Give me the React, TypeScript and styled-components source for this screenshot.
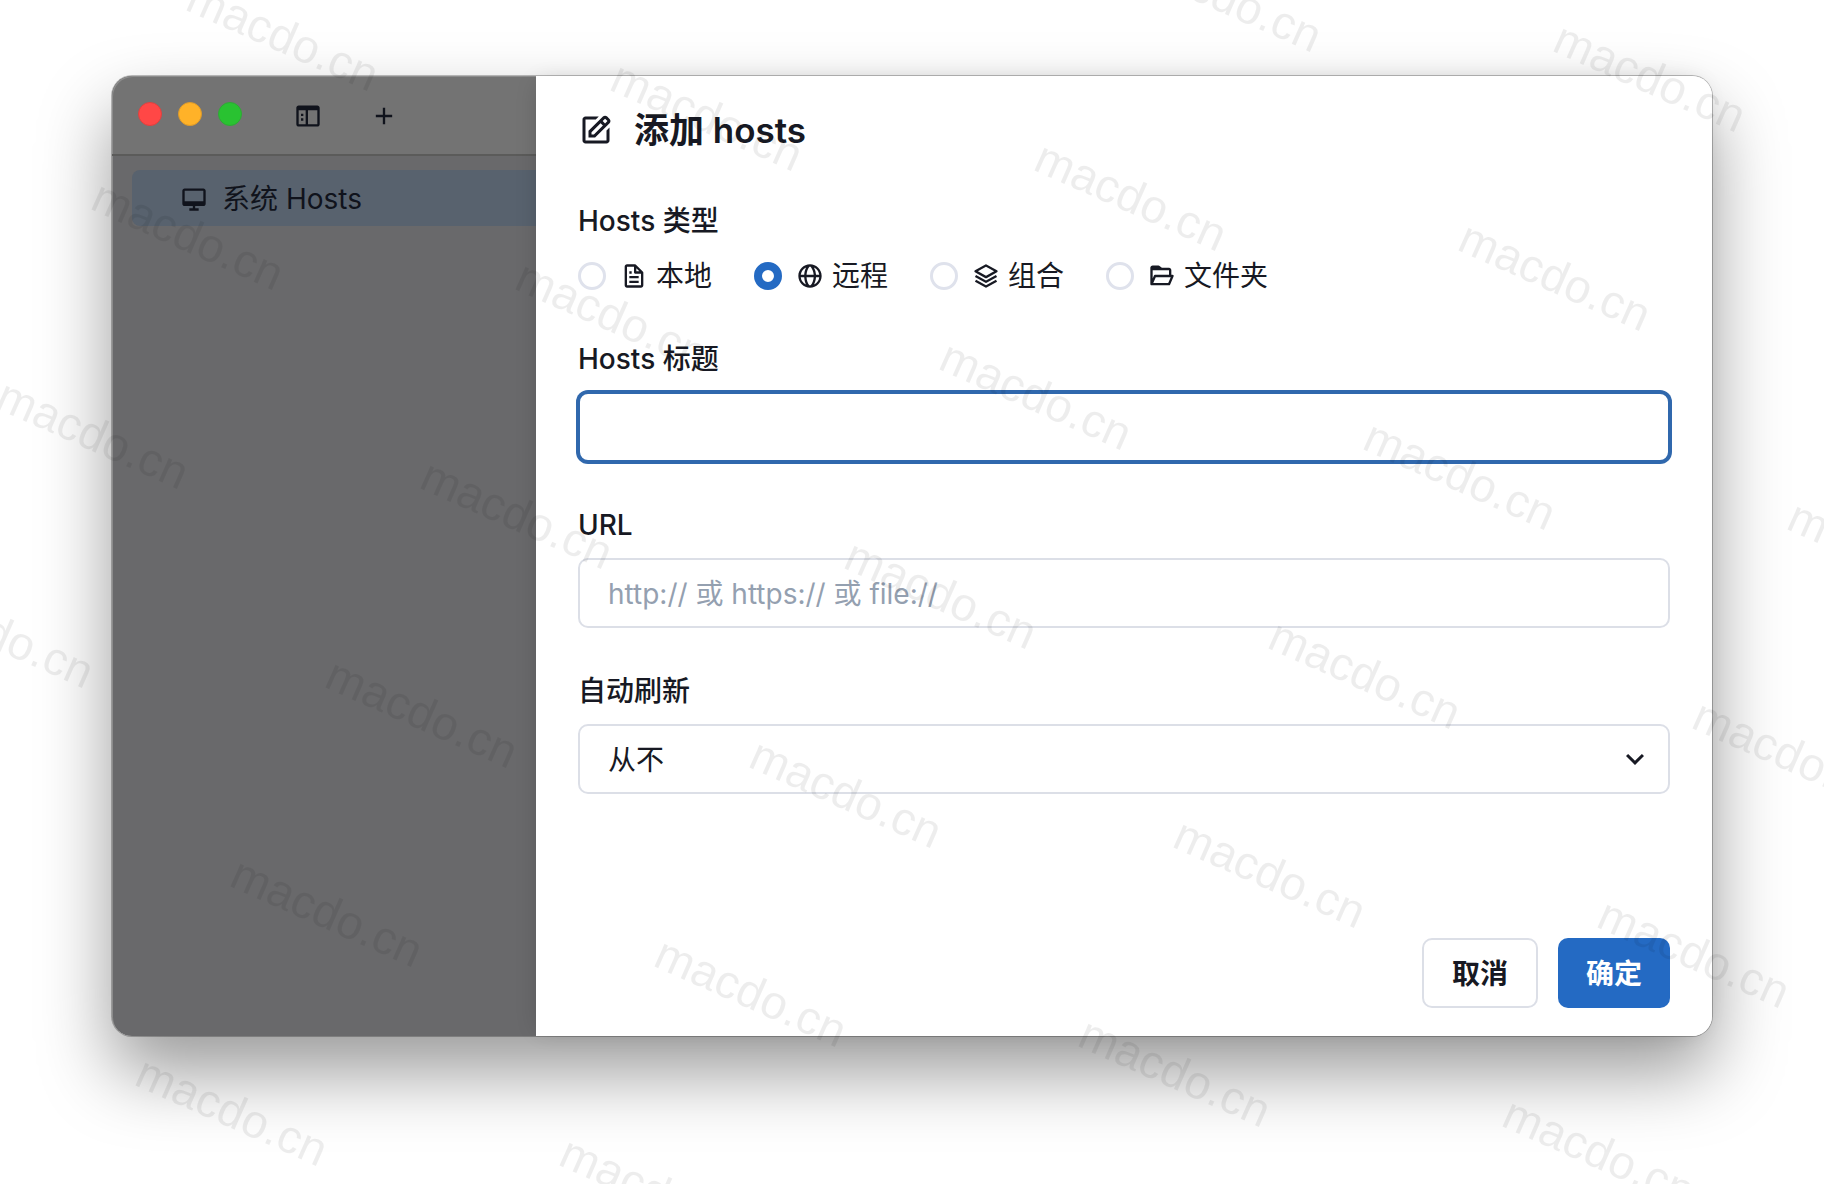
import React, { useState } from "react";
import styled, { createGlobalStyle } from "styled-components";
import {
  BiDesktop,
  BiEdit,
  BiFile,
  BiFolderOpen,
  BiGlobe,
  BiLayer,
  BiPlus,
  BiSidebar,
} from "react-icons/bi";
import { MdExpandMore } from "react-icons/md";

const color = {
  text: "#171923",
  line: "#dcdfe7",
  brand: "#246ac3",
  focus: "#3068ad",
  placeholder: "#94a0b0",
};

const GlobalStyle = createGlobalStyle`
  *, *::before, *::after { box-sizing: border-box; }
  body {
    margin: 0;
    background: #fff;
    color: ${color.text};
    font: 400 28px/42px Inter, "Noto Sans CJK SC", sans-serif;
  }
  button, input, select { font: inherit; color: inherit; }
  svg { display: block; flex: none; }
`;

const Page = styled.div`
  position: relative;
  display: flex;
  min-height: 100vh;
  padding: 76px 112px 148px;
  overflow: hidden;
`;

const Window = styled.main`
  display: flex;
  flex: 1;
  min-width: 0;
  border-radius: 20px;
  background: #fff;
  box-shadow: 0 0 0 1px rgba(0, 0, 0, 0.25), 0 36px 72px rgba(0, 0, 0, 0.4);
`;

const Sidebar = styled.aside`
  flex: 0 0 424px;
  border-radius: 20px 0 0 20px;
  background: #69696b;
  color: #10131c;
  box-shadow: inset 1px 1px 0 #8c8c8c;
`;

const Toolbar = styled.header`
  display: flex;
  align-items: center;
  height: 80px;
  padding-left: 26px;
  border-bottom: 2px solid #5b5b5a;
  border-radius: 20px 0 0 0;
  background: #737373;
  box-shadow: inset 1px 1px 0 #8c8c8c;
`;

const Lights = styled.div`
  display: flex;
  gap: 16px;
  margin-right: 38px;
  padding-bottom: 2px;
`;

const Light = styled.button<{ $fill: string; $edge: string }>`
  width: 24px;
  height: 24px;
  padding: 0;
  border: 1px solid ${(p) => p.$edge};
  border-radius: 50%;
  background: ${(p) => p.$fill};
`;

const ToolButtons = styled.div`
  display: flex;
  gap: 20px;
  padding-top: 2px;
`;

const ToolButton = styled.button`
  display: grid;
  place-items: center;
  width: 56px;
  height: 56px;
  padding: 0;
  border: 0;
  background: none;
`;

const HostList = styled.nav`
  padding: 14px 0 14px 20px;
`;

const HostItem = styled.a`
  display: flex;
  align-items: center;
  gap: 14px;
  height: 56px;
  padding: 2px 0 0 48px;
  border-radius: 8px 0 0 8px;
  background: #58626e;
  color: inherit;
  text-decoration: none;
`;

const Drawer = styled.form`
  display: flex;
  flex: 1;
  flex-direction: column;
  min-width: 0;
  border-radius: 0 20px 20px 0;
  background: #fff;
  box-shadow: -4px 0 24px -8px rgba(0, 0, 0, 0.2);
`;

const DrawerHeader = styled.header`
  display: flex;
  align-items: center;
  gap: 20px;
  padding: 28px 42px;
`;

const Title = styled.h1`
  margin: 0;
  font-size: 35px;
  line-height: 52px;
  font-weight: 600;
`;

const Fields = styled.div`
  display: flex;
  flex: 1;
  flex-direction: column;
  gap: 42px;
  padding: 16px 42px;
`;

const Field = styled.div`
  display: flex;
  flex-direction: column;
  gap: 12px;
`;

const FieldLabel = styled.label`
  align-self: flex-start;
  font-weight: 500;
`;

const RadioRow = styled.div`
  display: flex;
  flex-wrap: wrap;
  gap: 42px;
`;

const RadioOption = styled.label`
  display: flex;
  align-items: center;
  height: 42px;
  padding-top: 2px;
`;

const Radio = styled.input`
  appearance: none;
  width: 28px;
  height: 28px;
  margin: 0 14px 0 0;
  border: 3px solid #dfe2ec;
  border-radius: 50%;
  background: #fff;

  &:checked {
    border: 8px solid ${color.brand};
  }
`;

const RadioText = styled.span`
  margin-left: 8px;
`;

const TextInput = styled.input`
  width: 100%;
  height: 70px;
  padding: 2px 28px 0;
  border: 2px solid ${color.line};
  border-radius: 10px;
  background: #fff;
  outline: none;

  &::placeholder {
    color: ${color.placeholder};
    opacity: 1;
  }

  &:focus {
    border-color: ${color.focus};
    box-shadow: 0 0 0 2px ${color.focus};
  }
`;

const SelectBox = styled.div`
  position: relative;
`;

const Select = styled.select`
  appearance: none;
  width: 100%;
  height: 70px;
  padding: 2px 70px 0 28px;
  border: 2px solid ${color.line};
  border-radius: 10px;
  background: #fff;
`;

const SelectArrow = styled(MdExpandMore)`
  position: absolute;
  top: 17px;
  right: 17px;
  pointer-events: none;
`;

const DrawerFooter = styled.footer`
  display: flex;
  justify-content: flex-end;
  gap: 20px;
  padding: 14px 42px 28px;
`;

const Button = styled.button<{ $primary?: boolean }>`
  height: 70px;
  padding: 2px 28px 0;
  border: ${(p) => (p.$primary ? "0" : `2px solid ${color.line}`)};
  border-radius: 10px;
  background: ${(p) => (p.$primary ? color.brand : "#fff")};
  color: ${(p) => (p.$primary ? "#fff" : color.text)};
  font-weight: 600;
`;

const WatermarkLayer = styled.div`
  position: absolute;
  inset: 0;
  overflow: hidden;
  pointer-events: none;
`;

const WatermarkText = styled.span`
  position: absolute;
  color: rgba(0, 0, 0, 0.07);
  font: 47px/48px "Liberation Sans", Arial, sans-serif;
  transform: translate(-50%, -50%) rotate(24deg);
`;

const hostTypes = [
  { id: "local", label: "本地", Icon: BiFile },
  { id: "remote", label: "远程", Icon: BiGlobe },
  { id: "group", label: "组合", Icon: BiLayer },
  { id: "folder", label: "文件夹", Icon: BiFolderOpen },
];

// The watermark repeats on a slanted lattice: one step across, one step down.
const origin = { x: 232, y: 1111 };
const across = { x: 424, y: 80 };
const down = { x: -95, y: 199 };
const marks: { x: number; y: number }[] = [];
for (let row = -8; row <= 1; row++) {
  for (let col = -2; col <= 4; col++) {
    const x = origin.x + col * across.x + row * down.x;
    const y = origin.y + col * across.y + row * down.y;
    if (x > -90 && x < 1910 && y > -50 && y < 1230) marks.push({ x, y });
  }
}

function Watermark() {
  return (
    <WatermarkLayer aria-hidden="true">
      {marks.map((m) => (
        <WatermarkText key={`${m.x}:${m.y}`} style={{ left: m.x, top: m.y }}>
          macdo.cn
        </WatermarkText>
      ))}
    </WatermarkLayer>
  );
}

export default function App() {
  const [type, setType] = useState("remote");

  return (
    <Page>
      <GlobalStyle />
      <Window>
        <Sidebar>
          <Toolbar>
            <Lights>
              <Light type="button" aria-label="关闭" $fill="#ff4746" $edge="#e0403e" />
              <Light type="button" aria-label="最小化" $fill="#ffb228" $edge="#dd9a2a" />
              <Light type="button" aria-label="缩放" $fill="#29c231" $edge="#2fa836" />
            </Lights>
            <ToolButtons>
              <ToolButton type="button" aria-label="侧边栏">
                <BiSidebar size={28} />
              </ToolButton>
              <ToolButton type="button" aria-label="添加">
                <BiPlus size={28} />
              </ToolButton>
            </ToolButtons>
          </Toolbar>
          <HostList>
            <HostItem href="#system">
              <BiDesktop size={28} />
              <span>系统 Hosts</span>
            </HostItem>
          </HostList>
        </Sidebar>

        <Drawer onSubmit={(e) => e.preventDefault()}>
          <DrawerHeader>
            <BiEdit size={36} />
            <Title>添加 hosts</Title>
          </DrawerHeader>
          <Fields>
            <Field role="radiogroup" aria-labelledby="type-label">
              <FieldLabel as="span" id="type-label">
                Hosts 类型
              </FieldLabel>
              <RadioRow>
                {hostTypes.map(({ id, label, Icon }) => (
                  <RadioOption key={id}>
                    <Radio
                      type="radio"
                      name="type"
                      value={id}
                      checked={type === id}
                      onChange={() => setType(id)}
                    />
                    <Icon size={28} />
                    <RadioText>{label}</RadioText>
                  </RadioOption>
                ))}
              </RadioRow>
            </Field>
            <Field>
              <FieldLabel htmlFor="title">Hosts 标题</FieldLabel>
              <TextInput id="title" type="text" autoFocus />
            </Field>
            <Field>
              <FieldLabel htmlFor="url">URL</FieldLabel>
              <TextInput id="url" type="text" placeholder="http:// 或 https:// 或 file://" />
            </Field>
            <Field>
              <FieldLabel htmlFor="refresh">自动刷新</FieldLabel>
              <SelectBox>
                <Select id="refresh" defaultValue="never">
                  <option value="never">从不</option>
                </Select>
                <SelectArrow size={36} />
              </SelectBox>
            </Field>
          </Fields>
          <DrawerFooter>
            <Button type="button">取消</Button>
            <Button type="submit" $primary>
              确定
            </Button>
          </DrawerFooter>
        </Drawer>
      </Window>
      <Watermark />
    </Page>
  );
}
